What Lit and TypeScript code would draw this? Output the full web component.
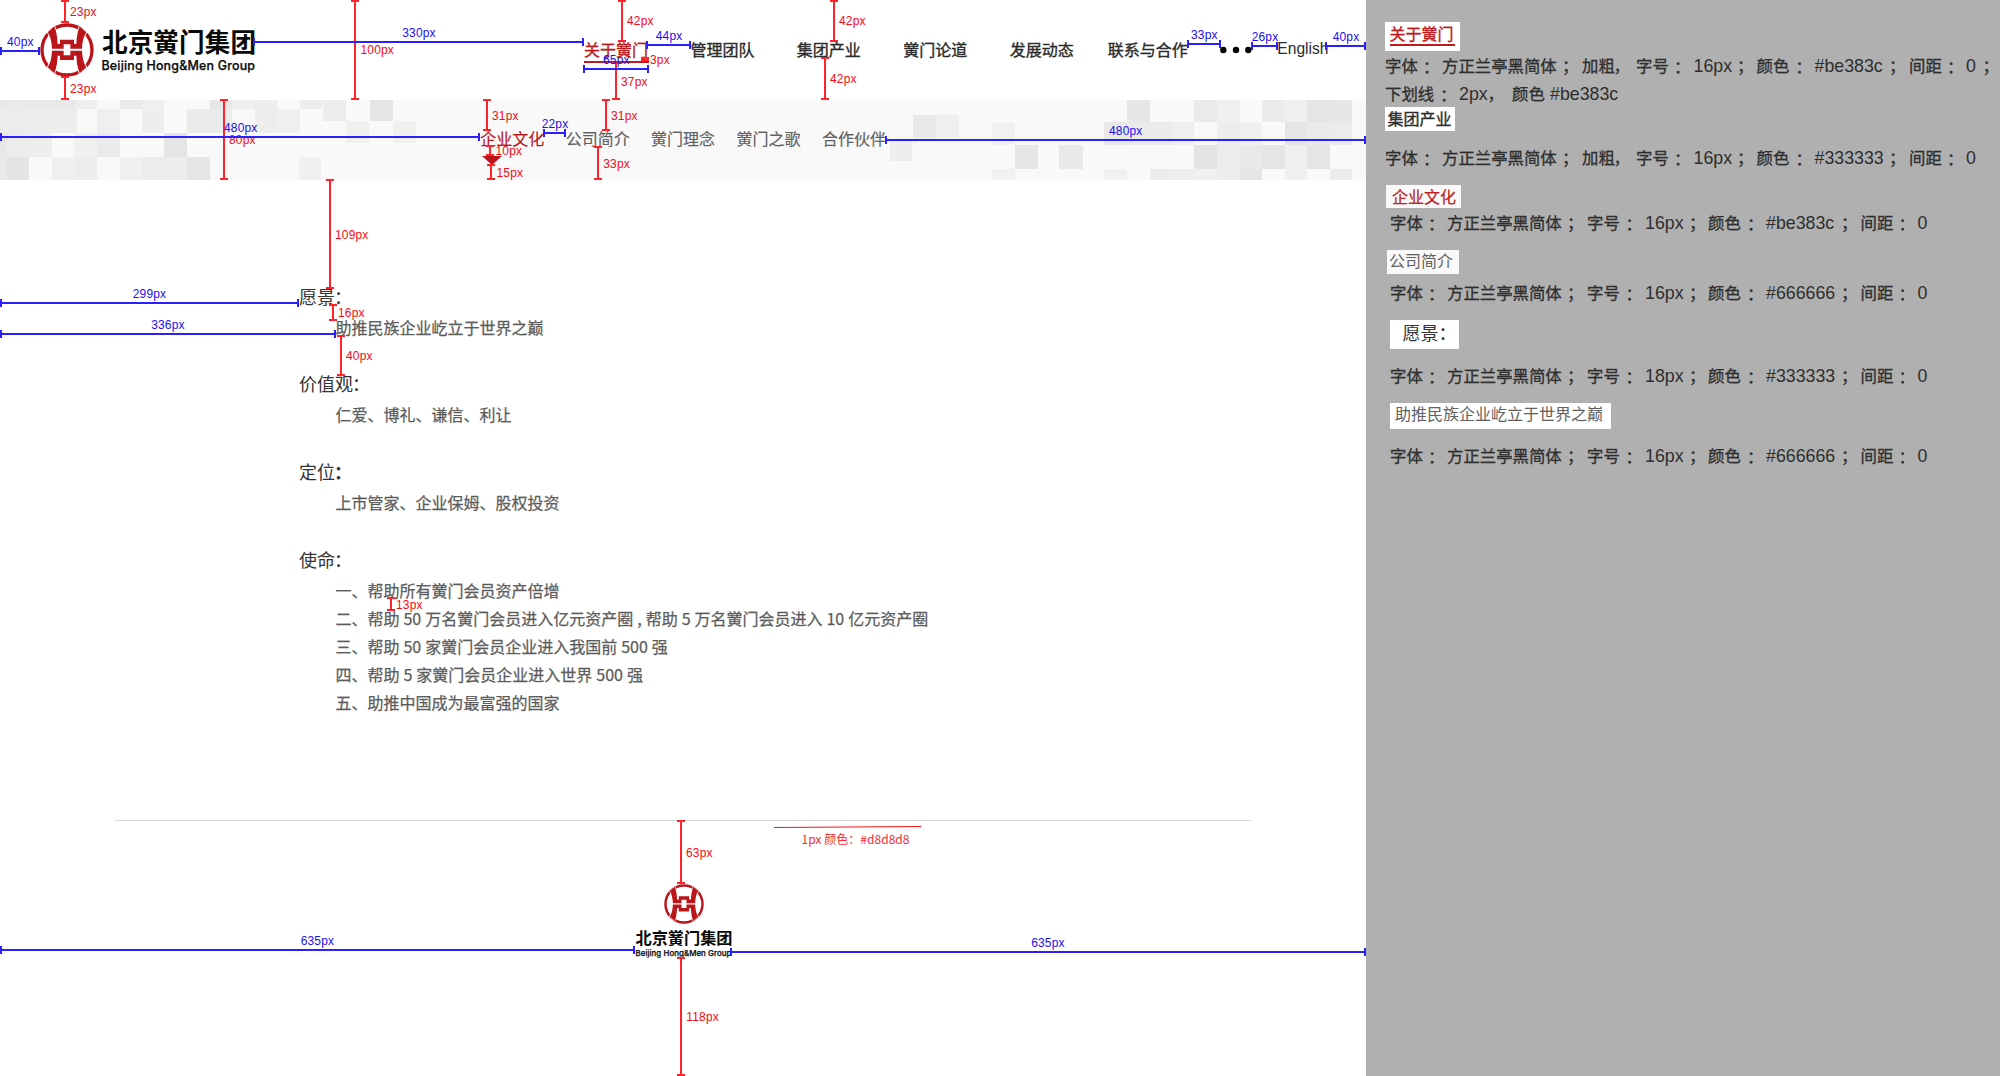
import { LitElement, html, svg, css } from "lit";
import { customElement, property } from "lit/decorators.js";
import { styleMap } from "lit/directives/style-map.js";

const CJK = css`"Noto Sans CJK SC", "Noto Sans", sans-serif`;

/* ---------- emblem ---------- */

const HALF =
  "M34 43 L54 25 C61 42 63 60 64 78 H71 V65 H113 V78 H120 C121 60 123 42 130 25 L150 43 C141 56 138 72 137 92.5 H102 V79 H82 V92.5 H47 C46 72 43 56 34 43Z";

@customElement("brand-emblem")
class BrandEmblem extends LitElement {
  static styles = css`
    :host { display: block; }
    svg { display: block; width: 100%; height: 100%; }
    .ring { fill: none; stroke: #b9151b; stroke-width: 10; }
    .post { fill: #b9151b; stroke: #fff; stroke-width: 5; paint-order: stroke; }
  `;
  render() {
    return html`<svg viewBox="11 15 162 162">
      <defs><clipPath id="disc"><circle cx="92" cy="96" r="80.5"></circle></clipPath></defs>
      <circle class="ring" cx="92" cy="96" r="75"></circle>
      <g clip-path="url(#disc)">
        <path class="post" d=${HALF}></path>
        <path class="post" d=${HALF} transform="matrix(1 0 0 -1 0 191)"></path>
      </g>
    </svg>`;
  }
}

/* ---------- mosaic strip ---------- */

// x, y, width, height, grey level
const TILES: [number, number, number, number, string][] = [
  [0, 0, 7, 9, "e8"], [7, 0, 23, 9, "ea"], [30, 0, 22, 9, "ea"], [52, 0, 23, 9, "e8"], [75, 0, 22, 9, "ee"],
  [120, 0, 22, 9, "ea"], [142, 0, 22, 9, "ef"], [210, 0, 22, 9, "e7"], [232, 0, 23, 9, "ef"], [255, 0, 23, 9, "ee"],
  [300, 0, 22, 9, "ec"], [323, 0, 23, 21, "ec"], [370, 0, 23, 21, "e5"],
  [0, 9, 7, 24, "ee"], [7, 9, 22, 24, "ec"], [29, 9, 23, 24, "ed"], [52, 9, 25, 24, "ed"], [97, 9, 23, 24, "ef"],
  [142, 9, 22, 24, "ee"], [187, 9, 23, 24, "eb"], [210, 9, 22, 24, "ec"], [255, 9, 23, 24, "ed"], [278, 9, 22, 24, "f0"],
  [346, 21, 23, 22, "f0"], [393, 21, 23, 22, "f0"],
  [0, 33, 7, 24, "e7"], [7, 33, 23, 24, "ec"], [30, 33, 22, 24, "ee"], [74, 33, 23, 24, "f0"], [97, 33, 23, 24, "eb"],
  [164, 33, 23, 24, "e5"],
  [0, 57, 7, 23, "ea"], [7, 57, 22, 23, "e4"], [52, 57, 22, 23, "f0"], [74, 57, 23, 23, "ed"], [120, 57, 22, 23, "f0"],
  [142, 57, 45, 23, "ec"], [187, 57, 23, 23, "e5"], [299, 57, 22, 23, "f0"],
  [890, 39, 22, 22, "ee"], [913, 15, 23, 23, "e8"], [936, 15, 23, 23, "ef"],
  [992, 23, 23, 22, "f1"], [1015, 45, 23, 24, "e6"], [1059, 45, 24, 24, "e9"], [992, 69, 23, 11, "f1"],
  [1104, 22, 23, 23, "e8"], [1127, 0, 23, 22, "e7"], [1127, 22, 23, 23, "eb"], [1150, 22, 22, 23, "eb"],
  [1172, 22, 22, 23, "ef"], [1104, 69, 23, 11, "f1"], [1150, 69, 22, 11, "ec"], [1172, 69, 22, 11, "ee"],
  [1194, 0, 23, 22, "ea"], [1194, 45, 23, 24, "e4"], [1194, 69, 23, 11, "f0"],
  [1217, 0, 23, 22, "f0"], [1217, 22, 23, 23, "ed"], [1217, 45, 23, 24, "ec"], [1217, 69, 23, 11, "ec"],
  [1240, 22, 22, 23, "f0"], [1240, 45, 22, 24, "e9"], [1240, 69, 22, 11, "e5"],
  [1262, 0, 23, 22, "eb"], [1262, 45, 23, 24, "e5"],
  [1285, 0, 22, 22, "ef"], [1285, 22, 22, 23, "e5"], [1285, 45, 22, 24, "ef"], [1285, 69, 22, 11, "f0"],
  [1307, 0, 23, 22, "e5"], [1307, 22, 23, 23, "ea"], [1307, 45, 23, 24, "e5"],
  [1330, 0, 22, 23, "e7"], [1330, 23, 22, 22, "ec"], [1330, 69, 22, 11, "ec"],
];

/* ---------- measurement overlay ---------- */

// axis position, start, end, label, label x, label baseline
type Measure = [number, number, number, string, number, number];

const VERTICAL: Measure[] = [
  [65, 0, 23, "23px", 70, 16],
  [65, 76, 100, "23px", 70, 93],
  [355, 0, 100, "100px", 360.5, 54],
  [224, 99, 180, "80px", 229, 144],
  [487, 99, 131, "31px", 492, 120],
  [490, 145, 156, "10px", 495.5, 155],
  [491, 164, 180, "15px", 496.5, 177],
  [606, 99, 131, "31px", 611, 120],
  [598, 146, 180, "33px", 603.3, 168],
  [622, 0, 42, "42px", 627, 25],
  [834, 0, 42, "42px", 839, 25],
  [825, 57, 100, "42px", 830, 83],
  [616, 62, 100, "37px", 621, 86],
  [330, 179, 289, "109px", 335, 239],
  [333, 304, 321, "16px", 338, 317],
  [341, 335, 376, "40px", 346, 360],
  [391, 597, 611, "13px", 396, 609],
  [681, 820, 884, "63px", 686, 857],
  [681, 957, 1076, "118px", 686.3, 1021],
];

const HORIZONTAL: Measure[] = [
  [51, 0, 40, "40px", 7, 46],
  [42, 253, 584, "330px", 402.3, 37],
  [137, 0, 480, "480px", 224, 132],
  [45, 646, 691, "44px", 655.8, 40],
  [69, 583, 649, "65px", 603, 64],
  [133, 543, 566, "22px", 541.7, 128],
  [44, 1187, 1221, "33px", 1191, 39],
  [46, 1251, 1278, "26px", 1251.7, 41],
  [46, 1325, 1366, "40px", 1332.7, 41],
  [140, 885, 1366, "480px", 1109, 135],
  [303, 0, 299, "299px", 132.8, 298],
  [334, 0, 336, "336px", 151.2, 329],
  [950, 0, 635, "635px", 300.7, 945],
  [952, 730, 1366, "635px", 1031.2, 947],
];

@customElement("measure-layer")
class MeasureLayer extends LitElement {
  static styles = css`
    :host { display: block; pointer-events: none; }
    svg { display: block; width: 100%; height: 100%; }
    text { font: 12px "Liberation Sans", Arial, sans-serif; letter-spacing: 0.15px; }
    .v { stroke: #ff232b; stroke-width: 2; fill: none; }
    .h { stroke: #2a20ff; stroke-width: 2; fill: none; }
    .vt { fill: #f80a14; }
    .ht { fill: #1e0ef0; }
    .block { fill: #ff232b; }
    .thin { stroke: #f8121c; stroke-width: 1; }
    .note { font: 400 12px "Noto Sans CJK SC", "Noto Sans", sans-serif; fill: #fb2a34; letter-spacing: 0; }
  `;
  render() {
    return html`<svg viewBox="0 0 1366 1076">
      ${VERTICAL.map(([x, a, b, label, lx, ly]) => svg`
        <path class="v" d="M${x} ${a}V${b}M${x - 4} ${a + 1}h8M${x - 4} ${b - 1}h8"></path>
        <text class="vt" x=${lx} y=${ly}>${label}</text>`)}
      ${HORIZONTAL.map(([y, a, b, label, lx, ly]) => svg`
        <path class="h" d="M${a} ${y}H${b}M${a + 1} ${y - 4}v8M${b - 1} ${y - 4}v8"></path>
        <text class="ht" x=${lx} y=${ly}>${label}</text>`)}
      <rect class="block" x="641" y="57" width="8" height="4"></rect>
      <text class="vt" x="650" y="64">3px</text>
      <line class="thin" x1="774" y1="827.5" x2="921" y2="826.5"></line>
      <text class="note" x="801.5" y="844" textLength="108">1px 颜色：#d8d8d8</text>
    </svg>`;
  }
}

/* ---------- specification line ---------- */

// text and its left offset inside the line
type Token = [string, number];

const full = (size: string, colour: string): Token[] => [
  ["字体", 0], ["：", 38], ["方正兰亭黑简体", 57], ["；", 177], ["字号", 197], ["：", 235.5], [size, 255],
  ["；", 299], ["颜色", 318], ["：", 357], [colour, 376], ["；", 451], ["间距", 470.5], ["：", 508.5], ["0", 527.5],
];
const bold = (size: string, colour: string): Token[] => [
  ["字体", 0], ["：", 38], ["方正兰亭黑简体", 57], ["；", 177], ["加粗", 197], ["，", 228.5], ["字号", 251], ["：", 289],
  [size, 308.5], ["；", 352], ["颜色", 371.5], ["：", 410.5], [colour, 429.5], ["；", 504], ["间距", 524], ["：", 562], ["0", 581],
];

@customElement("spec-line")
class SpecLine extends LitElement {
  @property({ attribute: false }) tokens: Token[] = [];
  static styles = css`
    :host { display: flex; height: 24px; line-height: 22px; white-space: nowrap;
      font-family: ${CJK}; font-size: 16.4px; font-weight: 400; color: #2e2e2e; -webkit-text-stroke: 0.3px #2e2e2e; }
    span { flex: none; }
    .latin { font-family: "Liberation Sans", Arial, sans-serif; font-size: 17.8px; -webkit-text-stroke: 0; line-height: 24px; }
    .colon { padding-top: 1px; }
  `;
  render() {
    return this.tokens.map(([text, x], i) => {
      const next = this.tokens[i + 1];
      const width = next ? `${next[1] - x}px` : "auto";
      const kind = /^[#0-9]/.test(text) ? "latin" : text === "：" ? "colon" : "";
      return html`<span class=${kind} style=${styleMap({ width })}>${text}</span>`;
    });
  }
}

/* ---------- page ---------- */

const SECTIONS: { title: string; strong?: boolean; lines: string[] }[] = [
  { title: "愿景", lines: ["助推民族企业屹立于世界之巅"] },
  { title: "价值观", lines: ["仁爱、博礼、谦信、利让"] },
  { title: "定位", strong: true, lines: ["上市管家、企业保姆、股权投资"] },
  {
    title: "使命",
    lines: [
      "一、帮助所有黉门会员资产倍增",
      "二、帮助 50 万名黉门会员进入亿元资产圈 , 帮助 5 万名黉门会员进入 10 亿元资产圈",
      "三、帮助 50 家黉门会员企业进入我国前 500 强",
      "四、帮助 5 家黉门会员企业进入世界 500 强",
      "五、助推中国成为最富强的国家",
    ],
  },
];

@customElement("app-root")
class AppRoot extends LitElement {
  static styles = css`
    :host { display: flex; width: 2000px; height: 1076px; overflow: hidden; font-family: ${CJK}; background: #fff; }
    .page { position: relative; width: 1366px; height: 1076px; flex: none; display: flex; flex-direction: column; }
    .overlay { position: absolute; inset: 0; }

    header { height: 100px; display: flex; align-items: center; box-sizing: border-box; padding-left: 40px; flex: none; }
    header > * { flex: none; }
    .emblem { width: 54px; height: 54px; }
    .wordmark { margin-left: 7.5px; width: 154px; height: 50px; overflow: visible; }
    .wordmark text, .foot-mark text { fill: #0a0a0a; }
    .zh { font-family: ${CJK}; font-weight: 700; }
    .en { font-family: Inter, "Open Sans", sans-serif; font-weight: 500; stroke: #0a0a0a; stroke-width: 0.25px; }
    nav { display: flex; font-size: 16px; white-space: nowrap; }
    .main { margin-left: 328.5px; height: 28px; line-height: 26px; font-weight: 400; color: #2b2b2b; -webkit-text-stroke: 0.35px; }
    .main span { margin-right: 42.4px; height: 26px; }
    .main .current { color: #be1a20; border-bottom: 2px solid #be1a20; padding: 3px 1px 0 0; margin-right: 41.4px; line-height: 20px; box-sizing: border-box; height: 27px; }
    .main .last { margin: 0; }
    .main .before-last { margin-right: 34px; }
    .dots { width: 32px; height: 8px; margin-left: 32.7px; }
    .english { margin-left: 25px; font: 15.6px/20px "Liberation Sans", Arial, sans-serif; color: #2b2b2b; padding-bottom: 3px; }

    .sub { position: relative; height: 80px; background: #f9f9f9; flex: none; }
    .mosaic { position: absolute; inset: 0; width: 1366px; height: 80px; }
    .links { position: relative; padding: 27px 0 0 480.3px; gap: 21.4px; line-height: 22px; color: #606060; -webkit-text-stroke: 0.15px; }
    .links .current { color: #b9151b; display: flex; flex-direction: column; }
    .caret { width: 0; border: 10px solid transparent; border-top: 9px solid #b9151b; border-bottom: 0; margin: 7px 0 0 1.5px; }

    main { flex: none; height: 640px; box-sizing: border-box; padding: 104.8px 0 0 299px; }
    section { margin-bottom: 31.7px; }
    h2 { margin: 0; font-size: 18px; line-height: 23px; font-weight: 400; color: #333; height: 28px; }
    h2 span { margin-left: -1px; }
    h2 .strong { font-weight: 700; }
    p { margin: 0; padding-left: 36.5px; font-size: 16px; line-height: 28px; color: #5c5c5c; word-spacing: 0.4px; -webkit-text-stroke: 0.25px; }

    footer { width: 1136px; margin: 0 auto; border-top: 1px solid #d8d8d8; display: flex; flex-direction: column; align-items: center; padding-top: 63px; flex: none; }
    .foot-emblem { width: 40px; height: 40px; margin-left: 1px; }
    .foot-mark { width: 98px; height: 34px; overflow: visible; margin: 4px 0 0 1.5px; }

    aside { flex: 1; background: #b0b0b0; display: flex; flex-direction: column; align-items: flex-start; }
    .chip { background: #fff; box-sizing: border-box; font-size: 16px; white-space: nowrap; line-height: 22px; }
    .chip.about { margin: 22px 0 3px 19px; width: 75px; height: 29px; padding-left: 4.5px; color: #be1a20; -webkit-text-stroke: 0.35px; }
    .chip.about span { display: block; width: 65px; height: 22px; border-bottom: 2px solid #be1a20; }
    .chip.industry { margin: 1px 0 15px 19px; width: 70px; height: 24px; padding-left: 2.5px; color: #2b2b2b; -webkit-text-stroke: 0.35px; }
    .chip.culture { margin: 15px 0 3px 20px; width: 75px; height: 23px; padding-left: 6px; color: #be1a20; background: #f9f9f9; -webkit-text-stroke: 0.2px; }
    .chip.intro { margin: 15px 0 7px 21px; width: 72px; height: 24px; padding-left: 2px; line-height: 20px; color: #606060; background: #f9f9f9; }
    .chip.vision { margin: 15px 0 15px 24px; width: 69px; height: 29px; padding-left: 12.5px; font-size: 18px; line-height: 25px; color: #333; }
    .chip.phrase { margin: 15px 0 15px 24px; width: 221px; height: 26px; padding-left: 5px; line-height: 21px; color: #606060; }
    .at19 { margin-left: 19px; }
    .at24 { margin-left: 24px; }
    .gap { margin-top: 4px; }
  `;

  render() {
    return html`
      <div class="page">
        <header>
          <brand-emblem class="emblem"></brand-emblem>
          <svg class="wordmark" viewBox="0 0 154 50">
            <text class="zh" x="0" y="26.5" font-size="25.6" textLength="154">北京黉门集团</text>
            <text class="en" x="-0.5" y="45.3" font-size="12.4" textLength="153.5">Beijing Hong&amp;Men Group</text>
          </svg>
          <nav class="main">
            <span class="current">关于黉门</span>
            <span>管理团队</span>
            <span>集团产业</span>
            <span>黉门论道</span>
            <span class="before-last">发展动态</span>
            <span class="last">联系与合作</span>
          </nav>
          <svg class="dots" viewBox="0 0 32 8">
            <circle cx="3.3" cy="4" r="3.2"></circle>
            <circle cx="16" cy="4" r="3.2"></circle>
            <circle cx="28.3" cy="4" r="3.2"></circle>
          </svg>
          <span class="english">English</span>
        </header>

        <div class="sub">
          <svg class="mosaic" viewBox="0 0 1366 80" shape-rendering="crispEdges">
            ${TILES.map(([x, y, w, h, g]) => svg`<rect x=${x} y=${y} width=${w} height=${h} fill="#${g}${g}${g}"></rect>`)}
          </svg>
          <nav class="links">
            <span class="current">企业文化<i class="caret"></i></span>
            <span>公司简介</span>
            <span>黉门理念</span>
            <span>黉门之歌</span>
            <span>合作伙伴</span>
          </nav>
        </div>

        <main>
          ${SECTIONS.map((s) => html`<section>
            <h2>${s.title}<span class=${s.strong ? "strong" : ""}>：</span></h2>
            ${s.lines.map((l) => html`<p>${l}</p>`)}
          </section>`)}
        </main>

        <footer>
          <brand-emblem class="foot-emblem"></brand-emblem>
          <svg class="foot-mark" viewBox="0 0 98 34">
            <text class="zh" x="0.5" y="16" font-size="16.2" textLength="97">北京黉门集团</text>
            <text class="en" x="0.5" y="28" font-size="7.9" textLength="96">Beijing Hong&amp;Men Group</text>
          </svg>
        </footer>

        <measure-layer class="overlay"></measure-layer>
      </div>

      <aside>
        <div class="chip about"><span>关于黉门</span></div>
        <spec-line class="at19" .tokens=${[...bold("16px", "#be383c"), ["；", 597.5]]}></spec-line>
        <spec-line class="at19 gap" .tokens=${[["下划线", 0], ["：", 55], ["2px", 74], ["，", 102.5], ["颜色", 127], ["#be383c", 165]]}></spec-line>
        <div class="chip industry">集团产业</div>
        <spec-line class="at19" .tokens=${bold("16px", "#333333")}></spec-line>
        <div class="chip culture">企业文化</div>
        <spec-line class="at24" .tokens=${full("16px", "#be383c")}></spec-line>
        <div class="chip intro">公司简介</div>
        <spec-line class="at24" .tokens=${full("16px", "#666666")}></spec-line>
        <div class="chip vision">愿景：</div>
        <spec-line class="at24" .tokens=${full("18px", "#333333")}></spec-line>
        <div class="chip phrase">助推民族企业屹立于世界之巅</div>
        <spec-line class="at24" .tokens=${full("16px", "#666666")}></spec-line>
      </aside>
    `;
  }
}
